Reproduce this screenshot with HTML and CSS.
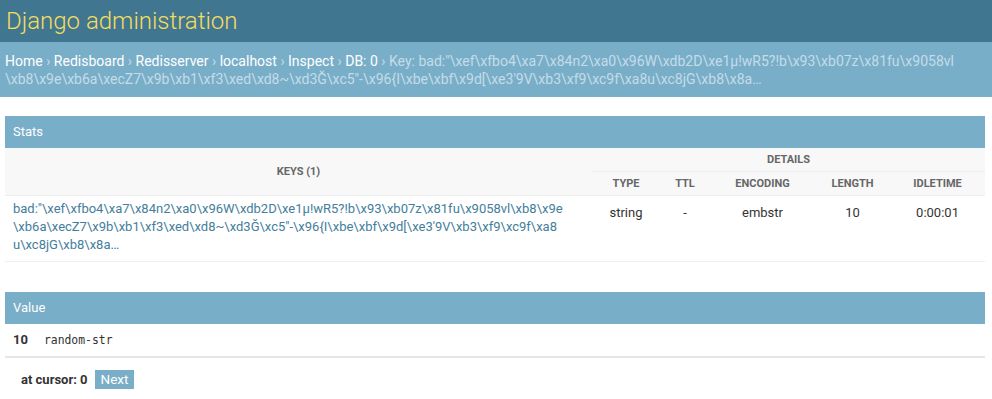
FILE: index.html
```html
<!DOCTYPE html>
<html>
<head>
<meta charset="utf-8">
<title>Django administration</title>
<link rel="stylesheet" href="styles.css">
</head>
<body>
<div class="header">
  <h1 class="branding">Django administration</h1>
</div>
<div class="breadcrumbs">
  <a href="#">Home</a> › <a href="#">Redisboard</a> › <a href="#">Redisserver</a> › <a href="#">localhost</a> › <a href="#">Inspect</a> › <a href="#">DB: 0</a> › Key: bad:"\xef\xfbo4\xa7\x84n2\xa0\x96W\xdb2D\xe1µ!wR5?!b\x93\xb07z\x81fu\x9058vl<br>\xb8\x9e\xb6a\xecZ7\x9b\xb1\xf3\xed\xd8~\xd3Ğ\xc5"-\x96{I\xbe\xbf\x9d[\xe3'9V\xb3\xf9\xc9f\xa8u\xc8jG\xb8\x8a…
</div>
<div class="content">
  <div class="module">
    <table class="stats">
      <caption>Stats</caption>
      <colgroup>
        <col class="c-key">
        <col class="c-type">
        <col class="c-ttl">
        <col class="c-enc">
        <col class="c-len">
        <col class="c-idle">
      </colgroup>
      <thead>
        <tr>
          <th rowspan="2" class="keys-th">Keys (1)</th>
          <th colspan="5" class="details-th">Details</th>
        </tr>
        <tr>
          <th>Type</th>
          <th>TTL</th>
          <th>Encoding</th>
          <th>Length</th>
          <th>Idletime</th>
        </tr>
      </thead>
      <tbody>
        <tr>
          <td class="key-cell"><a href="#">bad:"\xef\xfbo4\xa7\x84n2\xa0\x96W\xdb2D\xe1µ!wR5?!b\x93\xb07z\x81fu\x9058vl\xb8\x9e<br>\xb6a\xecZ7\x9b\xb1\xf3\xed\xd8~\xd3Ğ\xc5"-\x96{I\xbe\xbf\x9d[\xe3'9V\xb3\xf9\xc9f\xa8<br>u\xc8jG\xb8\x8a…</a></td>
          <td class="center">string</td>
          <td class="center">-</td>
          <td class="center">embstr</td>
          <td class="center">10</td>
          <td class="center">0:00:01</td>
        </tr>
      </tbody>
    </table>
  </div>
  <div class="module module-last">
    <table class="value">
      <caption>Value</caption>
      <tbody>
        <tr>
          <th>10</th>
          <td><code>random-str</code></td>
        </tr>
      </tbody>
    </table>
  </div>
  <div class="paginator">
    <span class="cursor">at cursor: 0</span>
    <a href="#" class="next">Next</a>
  </div>
</div>
</body>
</html>
```
FILE: styles.css
```css
html, body {
  margin: 0;
  padding: 0;
}
body {
  font-family: Roboto, "Liberation Sans", sans-serif;
  font-size: 14px;
  color: #333;
  background: #fff;
}
a {
  color: #447e9b;
  text-decoration: none;
}
.header {
  background: #417690;
  padding: 8px 6px 8px 6px;
  height: 26px;
}
.branding {
  margin: 0;
  font-size: 24px;
  font-weight: 300;
  line-height: 26px;
  color: #f5dd5d;
}
.breadcrumbs {
  background: #79aec8;
  color: #c4dce8;
  padding: 10px 5px;
  font-size: 14px;
  line-height: 18px;
  height: 35px;
}
.breadcrumbs a {
  color: #fff;
}
.content {
  padding: 19px 7px 0 5px;
}
.module {
  margin-bottom: 30px;
}
.module-last {
  margin-bottom: 0;
}
table {
  width: 100%;
  border-collapse: collapse;
  border-spacing: 0;
}
caption {
  background: #79aec8;
  color: #fff;
  text-align: left;
  font-size: 13px;
  font-weight: 400;
  padding: 8px;
  line-height: 16px;
}
.stats {
  table-layout: fixed;
}
.c-key { width: 587px; }
.c-type { width: 68px; }
.c-ttl { width: 50px; }
.c-enc { width: 105px; }
.c-len { width: 75px; }
.c-idle { width: 95px; }
thead th {
  background: #f8f8f8;
  color: #666;
  font-size: 11px;
  font-weight: 700;
  text-transform: uppercase;
  padding: 5px 10px;
  line-height: 13px;
  border-bottom: 1px solid #eee;
  text-align: center;
}
.keys-th {
  vertical-align: middle;
}
td, .value th {
  font-size: 13px;
  line-height: 18px;
  padding: 4px 8px 7px 8px;
  vertical-align: top;
  border-bottom: 1px solid #eee;
  text-align: left;
}
td.center {
  text-align: center;
  padding-top: 8px;
}
.value th, .value td {
  padding: 7px 8px;
  line-height: 17px;
  border-bottom: 2px solid #e6e6e6;
}
.value th {
  width: 16px;
  font-weight: 700;
  color: #333;
}
.value td {
  width: 100%;
  padding-left: 8px;
}
code {
  font-family: "DejaVu Sans Mono", monospace;
  font-size: 11.4px;
  color: #333;
}
.paginator {
  padding: 12px 16px;
  display: flex;
  align-items: center;
  gap: 7px;
  font-size: 13px;
}
.cursor {
  font-weight: 700;
  color: #333;
}
.next {
  background: #79aec8;
  color: #fff;
  padding: 1px 6px;
  line-height: 17px;
  font-size: 13.5px;
}
```
